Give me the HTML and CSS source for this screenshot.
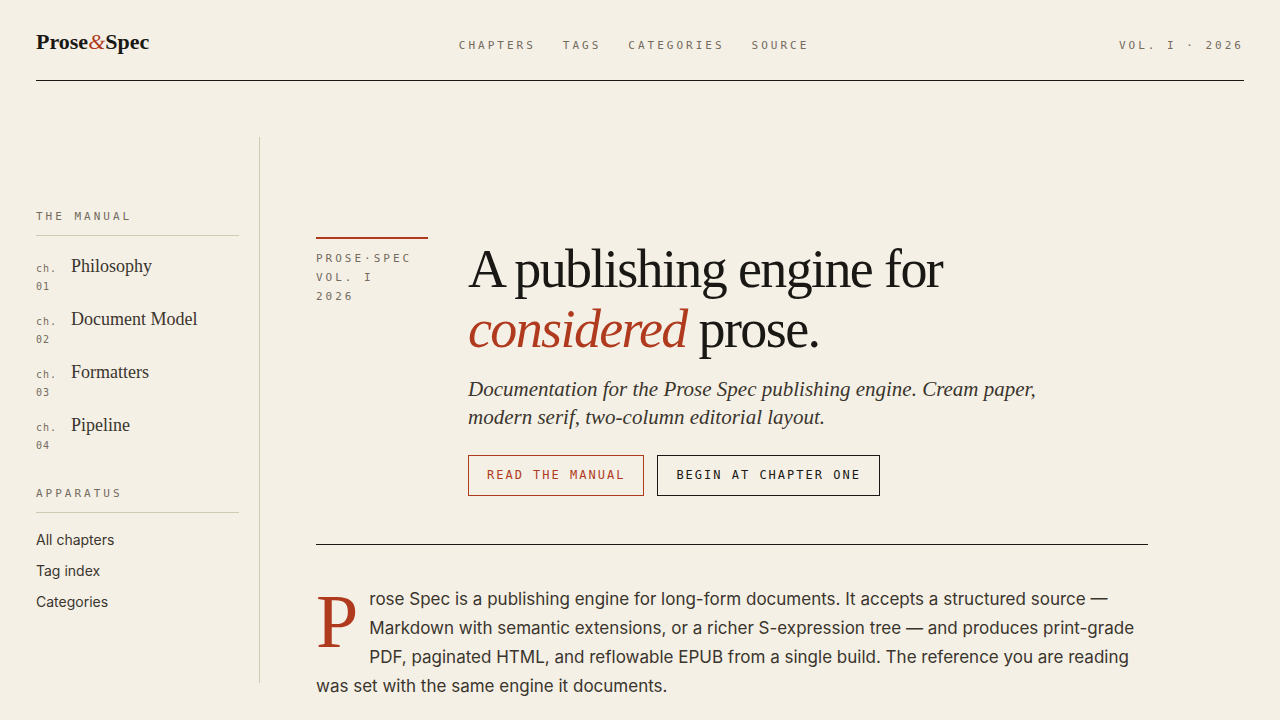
FILE: index.html
```html
<!DOCTYPE html>
<html lang="en">
<head>
    <meta charset="UTF-8">
    <meta name="viewport" content="width=device-width, initial-scale=1.0">
    <title>Prose &amp; Spec</title>
    <link rel="stylesheet" href="styles.css">
</head>
<body>
    <header class="masthead">
        <a class="logo" href="#">Prose<em>&amp;</em>Spec</a>
        <nav class="main-nav">
            <a href="#">Chapters</a>
            <a href="#">Tags</a>
            <a href="#">Categories</a>
            <a href="#">Source</a>
        </nav>
        <div class="volume">Vol. I · 2026</div>
    </header>

    <div class="layout">
        <aside class="sidebar">
            <h2>The Manual</h2>
            <ul class="chapters">
                <li><a href="#"><span class="num">ch. 01</span><span>Philosophy</span></a></li>
                <li><a href="#"><span class="num">ch. 02</span><span>Document Model</span></a></li>
                <li><a href="#"><span class="num">ch. 03</span><span>Formatters</span></a></li>
                <li><a href="#"><span class="num">ch. 04</span><span>Pipeline</span></a></li>
            </ul>
            <h2>Apparatus</h2>
            <ul class="apparatus">
                <li><a href="#">All chapters</a></li>
                <li><a href="#">Tag index</a></li>
                <li><a href="#">Categories</a></li>
            </ul>
        </aside>

        <main class="content">
            <section class="hero">
                <div class="hero-meta">Prose·Spec<br>Vol. I<br>2026</div>
                <div>
                    <h1>A publishing engine for <em>considered</em> prose.</h1>
                    <p class="lede">Documentation for the Prose Spec publishing engine. Cream paper, modern serif, two-column editorial layout.</p>
                    <div class="actions">
                        <a class="btn btn-accent" href="#">Read the manual</a>
                        <a class="btn" href="#">Begin at chapter one</a>
                    </div>
                </div>
            </section>
            <p class="intro">Prose Spec is a publishing engine for long-form documents. It accepts a structured source — Markdown with semantic extensions, or a richer S-expression tree — and produces print-grade PDF, paginated HTML, and reflowable EPUB from a single build. The reference you are reading was set with the same engine it documents.</p>
        </main>
    </div>
</body>
</html>
```
FILE: styles.css
```css
:root {
    --paper: #f5f0e6;
    --ink: #1a1814;
    --text: #3a352d;
    --muted: #736b5e;
    --rule: #d0cab2;
    --accent: #b03a1e;
    --serif: "Liberation Serif", serif;
    --sans: Inter, sans-serif;
    --mono: "DejaVu Sans Mono", monospace;
}
* {
    box-sizing: border-box;
}
body {
    margin: 0;
    padding: 0 36px;
    background: var(--paper);
    color: var(--text);
    font-family: var(--sans);
}
a {
    color: inherit;
    text-decoration: none;
}
ul {
    list-style: none;
    margin: 0;
    padding: 0;
}

/* header */
.masthead {
    display: flex;
    justify-content: space-between;
    align-items: baseline;
    padding: 28px 0 20px;
    border-bottom: 1px solid var(--ink);
    line-height: 28px;
}
.logo {
    color: var(--ink);
    font: bold 22px/28px var(--serif);
}
.logo em {
    color: var(--accent);
    font-weight: normal;
}
.main-nav, .volume {
    color: var(--muted);
    font-family: var(--mono);
    font-size: 11px;
    letter-spacing: 3px;
    text-transform: uppercase;
}
.main-nav {
    display: flex;
    gap: 27px;
}

/* columns */
.layout {
    display: grid;
    grid-template-columns: 224px 1fr;
    gap: 56px;
    align-items: start;
    padding-top: 56px;
}
.sidebar {
    min-height: calc(100vh - 174px);
    padding: 72px 20px 0 0;
    border-right: 1px solid var(--rule);
}
.sidebar h2 {
    margin: 0;
    padding-bottom: 10px;
    border-bottom: 1px solid var(--rule);
    color: var(--muted);
    font: normal 11px/16px var(--mono);
    letter-spacing: 3px;
    text-transform: uppercase;
}
.chapters {
    padding: 19px 0;
}
.chapters li {
    padding-bottom: 12px;
}
.chapters a {
    display: grid;
    grid-template-columns: 22px 1fr;
    gap: 13px;
    align-items: baseline;
    font: 18px/22px var(--serif);
}
.chapters .num {
    color: var(--muted);
    font: 10px/18px var(--mono);
    letter-spacing: 1px;
}
.apparatus {
    padding-top: 16px;
}
.apparatus li {
    padding-bottom: 9px;
    font-size: 14px;
    line-height: 22px;
}

/* hero */
.content {
    max-width: 832px;
    padding-top: 100px;
}
.hero {
    display: grid;
    grid-template-columns: 112px 1fr;
    gap: 40px;
    padding-bottom: 48px;
    border-bottom: 1px solid var(--ink);
}
.hero-meta {
    align-self: start;
    padding-top: 10px;
    border-top: 2px solid var(--accent);
    color: var(--muted);
    font: 11px/19px var(--mono);
    letter-spacing: 3px;
    text-transform: uppercase;
}
h1 {
    margin: 0;
    padding-top: 2px;
    color: var(--ink);
    font: normal 54px/60px var(--serif);
    letter-spacing: -0.03em;
}
h1 em {
    color: var(--accent);
}
.lede {
    max-width: 580px;
    margin: 16px 0 24px;
    font: italic 21px/28px var(--serif);
}
.actions {
    display: flex;
    gap: 13px;
}
.btn {
    padding: 10px 18px;
    border: 1px solid var(--ink);
    color: var(--ink);
    font: 12px/19px var(--mono);
    letter-spacing: 2px;
    text-transform: uppercase;
}
.btn-accent {
    border-color: var(--accent);
    color: var(--accent);
}

.intro {
    margin: 40px 0;
    font-size: 17px;
    line-height: 29px;
}
.intro::first-letter {
    float: left;
    padding: 0 11px 0 0;
    color: var(--accent);
    font: 76px/72px var(--serif);
}
```
